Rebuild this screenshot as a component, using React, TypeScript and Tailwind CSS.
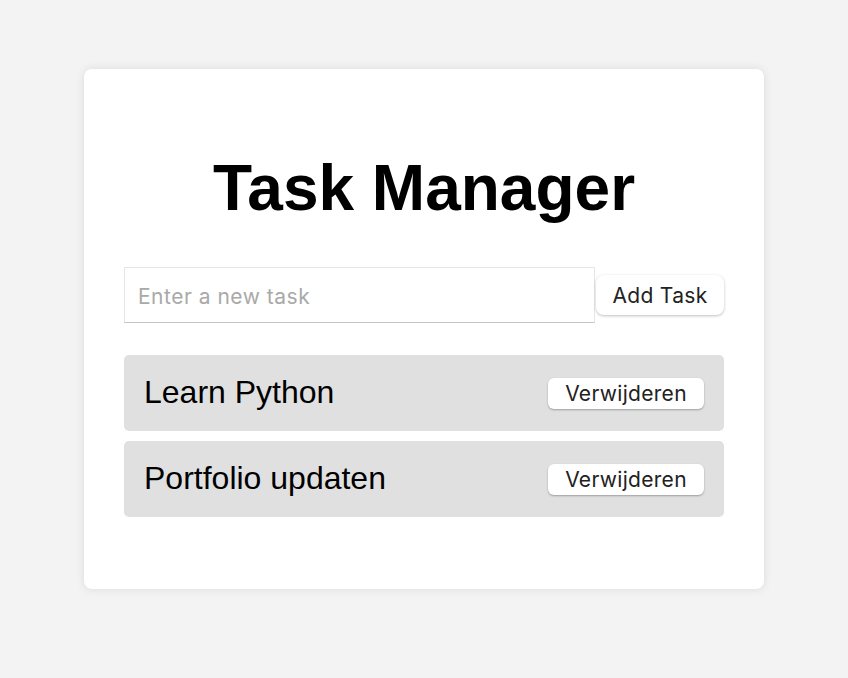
import React from "react";

export default function App() {
  const tasks = ["Learn Python", "Portfolio updaten"];
  const ui = { fontFamily: 'Inter, "Liberation Sans", Arial, sans-serif' };
  return (
    <div
      className="min-h-[678px] w-full bg-[#f3f3f3] pt-[69px]"
      style={{ fontFamily: '"Liberation Sans", Arial, sans-serif' }}
    >
      <div className="mx-auto w-[680px] rounded-[8px] bg-white px-[40px] pb-[72px] pt-[40px] shadow-[0_0_10px_rgba(0,0,0,0.1)]">
        <h1 className="mt-[42px] mb-[42px] text-center text-[64px] font-bold leading-[74px] text-black">
          Task Manager
        </h1>
        <div className="flex items-center">
          <input
            style={ui}
            className="h-[56px] w-[471px] border border-[#e6e6e6] border-b-[#c4c4c4] px-[13px] pt-[3px] text-[21px] tracking-[0.5px] text-black outline-none placeholder:text-[#a9a9a9]"
            placeholder="Enter a new task"
          />
          <button
            style={ui}
            className="ml-[1px] h-[40px] w-[128px] rounded-[8px] bg-white pt-[1px] text-[21px] tracking-[0.3px] text-[#222] shadow-[0_1px_3px_rgba(0,0,0,0.25)]"
          >
            Add Task
          </button>
        </div>
        <ul className="mt-[32px] flex flex-col gap-[10px]">
          {tasks.map((t) => (
            <li
              key={t}
              className="flex h-[76px] items-center justify-between rounded-[5px] bg-[#e0e0e0] px-[20px]"
            >
              <span className="-mt-[3px] text-[32px] text-black">{t}</span>
              <button
                style={ui}
                className="h-[31px] w-[156px] rounded-[6px] bg-white text-[21px] tracking-[0.3px] text-[#222] shadow-[0_1px_2px_rgba(0,0,0,0.3)]"
              >
                Verwijderen
              </button>
            </li>
          ))}
        </ul>
      </div>
    </div>
  );
}
